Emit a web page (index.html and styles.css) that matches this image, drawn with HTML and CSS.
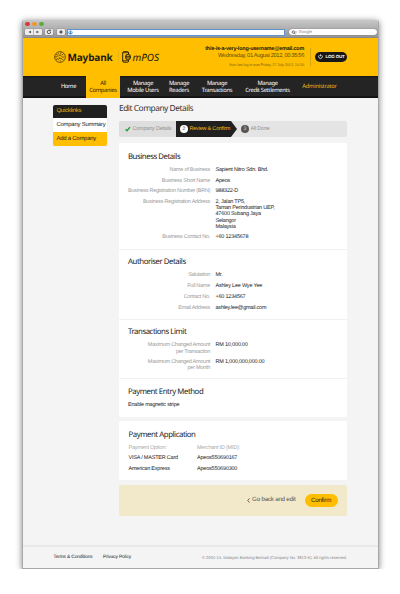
FILE: index.html
```
<!DOCTYPE html>
<html lang="en">
<head>
<meta charset="utf-8">
<title>Edit Company Details</title>
<link rel="stylesheet" href="styles.css">
</head>
<body>
<div class="window">
  <div class="chrome">
    <div class="lights"><i class="red"></i><i class="amber"></i><i class="green"></i></div>
    <div class="toolbar">
      <div class="btn pair"><svg viewBox="0 0 17 6"><path d="M6 1.7v2.6L3.5 3zM11.5 1.7v2.6L14 3z" fill="#444"/><path d="M8.5 0v6" stroke="#999" stroke-width=".6"/></svg></div>
      <div class="btn reload"><svg viewBox="0 0 8 6"><path d="M5.6 2.6A1.7 1.7 0 1 1 4 1.3h1.4M4.7.3l1 1-1 1" fill="none" stroke="#333" stroke-width=".8"/></svg></div>
      <div class="btn add"><svg viewBox="0 0 8 6"><path d="M4 1.3v3.4M2.3 3h3.4" stroke="#333" stroke-width="1.1"/></svg></div>
      <div class="address"><svg viewBox="0 0 6 6"><circle cx="3" cy="3" r="2.5" fill="#3c87d2"/><path d="M1.2 1.5l1.4.4-.3 1.4-1 .2zM3.8 1l1 1.4-.7 1.9-.7-1.1z" fill="#d9efff"/></svg></div>
      <div class="search"><svg viewBox="0 0 7 6"><circle cx="2.7" cy="2.5" r="1.5" fill="none" stroke="#333" stroke-width=".8"/><path d="M3.8 3.6l1.4 1.6M5.2 2.4h1.5" stroke="#333" stroke-width=".8"/></svg><span>Google</span></div>
    </div>
  </div>
  <header class="header">
    <div class="logo">
      <svg class="tiger" viewBox="0 0 12 12"><g fill="none" stroke="#352a12" stroke-width=".7"><circle cx="6" cy="6" r="5.4"/><path d="M2 3.500l2 .7M1 6l2.500-.5M2 8.500l2-1M4 2l1.200 1.600M7 1.200l-.4 2M9.500 3l-1.700 1M4.200 5.200c1.500-1.500 3-.9 3.600.3s1.600.6 2.700.4M4 8.800c1-2 2.700-1.800 4-.8M6 6.300l-.9 1M7 10.600L6 9.200M9.600 8.900l-1.400-.6"/></g></svg>
      <span class="brand">Maybank</span>
      <i class="logo-rule"></i>
      <svg class="phone" viewBox="0 0 10 12"><path d="M6.600 3V1.800Q6.600 .7 5.500 .7H1.800Q.7.7.7 1.800V10Q.7 11.200 1.800 11.200H5.500Q6.600 11.200 6.600 10V8.800" fill="none" stroke="#2b2415" stroke-width="1"/><path d="M1 1.700h5.300M1 9.700h5.300" stroke="#2b2415" stroke-width=".8"/><circle cx="6" cy="5.900" r="2.400" fill="#ffbe00" stroke="#2b2415" stroke-width="1.100"/><path d="M4 5.900h4" stroke="#2b2415" stroke-width="1.200"/></svg>
      <span class="product">mPOS</span>
    </div>
    <div class="account">
      <b class="user">this-is-a-very-long-username@email.com</b>
      <span class="date">Wednesday, 01 August 2012, 00:35:56</span>
      <span class="last">Your last log in was Friday, 27 July 2012, 10:20</span>
    </div>
    <div class="logout"><svg viewBox="0 0 6 6"><path d="M1.700 1.400a2.200 2.200 0 1 0 2.600 0M3 .3v2.500" fill="none" stroke="#fff" stroke-width=".9"/></svg><span>LOG OUT</span></div>
  </header>
  <nav class="nav">
    <a class="n-home">Home</a>
    <a class="n-all">All<br>Companies</a>
    <a class="n-users">Manage<br>Mobile Users</a>
    <a class="n-readers">Manage<br>Readers</a>
    <a class="n-trans">Manage<br>Transactions</a>
    <a class="n-credit">Manage<br>Credit Settlements</a>
    <a class="n-admin">Administrator</a>
  </nav>
  <div class="content">
    <aside class="side">
      <div class="side-title">Quicklinks</div>
      <a class="side-link">Company Summary</a>
      <a class="side-link active">Add a Company</a>
    </aside>
    <main class="main">
      <h1>Edit Company Details</h1>
      <div class="steps">
        <div class="step done"><svg viewBox="0 0 6 6"><path d="M.6 3.200l1.600 1.700L5.400.9" fill="none" stroke="#23a03c" stroke-width="1.500"/></svg><span>Company Details</span></div>
        <div class="step current"><i class="num">2</i><span>Review &amp; Confirm</span></div>
        <div class="step next"><i class="num">3</i><span>All Done</span></div>
      </div>
      <div class="card">
        <section class="business">
          <h2>Business Details</h2>
          <dl>
            <dt>Name of Business</dt><dd>Sapient Nitro Sdn. Bhd.</dd>
            <dt>Business Short Name</dt><dd>Apeos</dd>
            <dt>Business Registration Number (BRN)</dt><dd>988322-D</dd>
            <dt>Business Registration Address</dt><dd>2, Jalan TP5,<br>Taman Perindustrian UEP,<br>47600 Subang Jaya<br>Selangor<br>Malaysia</dd>
            <dt>Business Contact No.</dt><dd>+60 12345678</dd>
          </dl>
        </section>
        <section class="authoriser">
          <h2>Authoriser Details</h2>
          <dl>
            <dt>Salutation</dt><dd>Mr.</dd>
            <dt>Full Name</dt><dd>Ashley Lee Wye Yee</dd>
            <dt>Contact No.</dt><dd>+60 1234567</dd>
            <dt>Email Address</dt><dd>ashley.lee@gmail.com</dd>
          </dl>
        </section>
        <section class="limit">
          <h2>Transactions Limit</h2>
          <dl>
            <dt>Maximum Changed Amount<br>per Transaction</dt><dd>RM 10,000.00</dd>
            <dt>Maximum Changed Amount<br>per Month</dt><dd>RM 1,000,000,000.00</dd>
          </dl>
        </section>
        <section class="entry">
          <h2>Payment Entry Method</h2>
          <p>Enable magnetic stripe</p>
        </section>
      </div>
      <div class="card application">
        <h2>Payment Application</h2>
        <div class="options">
          <span class="muted">Payment Option:</span><span class="muted">Merchant ID (MID):</span>
          <span>VISA / MASTER Card</span><span>Apeos550690167</span>
          <span>American Express</span><span>Apeos550690300</span>
        </div>
      </div>
      <div class="actions">
        <a class="back"><svg viewBox="0 0 3 5"><path d="M2.500 .4L.7 2.500l1.800 2.100" fill="none" stroke="#444" stroke-width=".8"/></svg><span>Go back and edit</span></a>
        <a class="confirm">Confirm</a>
      </div>
    </main>
  </div>
  <footer class="footer">
    <a class="terms">Terms &amp; Conditions</a><a class="privacy">Privacy Policy</a>
    <span class="copy">© 2001-14. Malayan Banking Berhad (Company No. 3813-K). All rights reserved.</span>
  </footer>
</div>
</body>
</html>
```
FILE: styles.css
```
* { box-sizing: border-box; }
body { margin: 0; background: #fff; font: 5.5px/6.3px "Liberation Sans", sans-serif; letter-spacing: -.21px; color: #222; overflow: hidden; white-space: nowrap; text-rendering: geometricPrecision; }
h1, h2, dl, dd, p { margin: 0; }
i { font-style: normal; display: block; }
svg { display: block; flex: none; overflow: visible; }

.window { width: 357px; height: 548.5px; margin: 20px 0 0 22px; display: flex; flex-direction: column; border: 1px solid #a8a8a8; border-top: 0; border-radius: 3px 3px 0 0; overflow: hidden; background: #f4f4f4; box-shadow: 0 1px 6px rgba(0,0,0,.5); }

.chrome { height: 18px; flex: none; background: linear-gradient(#c8c8c8, #969696); border-bottom: 1px solid #888; }
.lights { display: flex; gap: 2.5px; padding: 2px 0 0 2px; height: 8px; }
.lights i { width: 4.5px; height: 4px; border-radius: 50%; }
.red { background: #e0352f; } .amber { background: #f0962b; } .green { background: #5cab36; }
.toolbar { display: flex; align-items: center; height: 8px; padding-left: 2px; }
.btn { height: 6px; background: #ececec; border-radius: 1px; box-shadow: 0 0 1px #444; }
.btn svg { height: 6px; width: 100%; }
.pair { width: 17px; } .reload { width: 8px; margin-left: 3px; } .add { width: 8px; margin-left: 3.5px; }
.address { width: 218px; height: 7px; margin-left: 2.5px; background: #fff; border: 1px solid #5d94cf; }
.address svg { width: 5px; height: 5px; }
.search { width: 88px; height: 6.5px; margin-left: 4px; border-radius: 4px; background: #fff; box-shadow: 0 0 1px #444; display: flex; align-items: center; padding-left: 2px; gap: 1.5px; font-size: 4.2px; letter-spacing: 0; color: #888; }
.search svg { width: 6px; height: 5px; }

.header { height: 37.5px; flex: none; background: #ffbe00; display: flex; }
.logo { display: flex; align-items: center; height: 37px; width: 146px; padding-left: 31px; }
.tiger { width: 12px; height: 12px; }
.brand { font: bold 10px/14px "Noto Sans", sans-serif; color: #201b10; width: 46px; margin-left: 1.5px; letter-spacing: -.15px; }
.logo-rule { width: 1px; height: 11px; margin-left: 4.5px; background: #edb20c; }
.phone { width: 10px; height: 12px; margin-left: 3px; }
.product { font: italic 10px/14px "Noto Sans", sans-serif; color: #1c1810; margin-left: .5px; letter-spacing: -.05px; }
.account { width: 135px; padding-top: 8px; display: flex; flex-direction: column; align-items: flex-end; line-height: 6.5px; color: #5f4b11; }
.user { color: #241d0c; font-size: 5.4px; letter-spacing: -.18px; }
.date { font-size: 5.7px; letter-spacing: -.33px; }
.last { font-size: 3.9px; line-height: 8px; padding-top: 1.5px; letter-spacing: -.12px; color: #8a6911; }
.logout { align-self: flex-start; margin: 14px 0 0 11px; width: 32px; height: 9.5px; border-radius: 5px; background: #171717; color: #fff; display: flex; align-items: center; gap: 2.5px; padding-left: 3px; font-size: 4.5px; font-weight: bold; position: relative; }
.logout::before { content: ""; position: absolute; left: -5px; top: -4px; width: 1px; height: 18px; background: #d8a414; }
.logout svg { width: 5px; height: 5px; }

.nav { height: 22px; flex: none; background: linear-gradient(#151515, #242424 2px, #242424 19.5px, #111 21px); display: flex; font: 5.8px/7px "Noto Sans", sans-serif; letter-spacing: -.33px; color: #fff; text-align: center; }
.nav a { display: flex; align-items: center; justify-content: center; }
.n-home { width: 33px; margin-left: 29px; }
.nav .n-all { width: 34px; margin-left: 1px; background: #ffbe00; color: #302503; }
.n-users { width: 46px; } .n-readers { width: 26px; } .n-trans { width: 50px; } .n-credit { width: 51px; }
.nav .n-admin { width: 53px; color: #eeb213; letter-spacing: -.26px; }

.content { display: flex; height: 447.5px; flex: none; padding: 7.5px 0 0 30px; }
.side { width: 53.5px; height: 40.5px; border-radius: 2px; overflow: hidden; box-shadow: 0 0 1px rgba(0,0,0,.15); }
.side > * { display: flex; align-items: center; padding-left: 3.5px; height: 14px; font-size: 5.9px; }
.side .side-title { height: 13px; background: #202020; color: #efb40d; }
.side-link { background: #fff; }
.side .active { height: 13.5px; background: #ffbe00; }
.main { width: 228px; margin-left: 12.5px; color: #222; }
h1 { font: 8.4px/11px "Noto Sans", sans-serif; letter-spacing: -.48px; color: #333; margin-top: -2.5px; }
h2 { font: 7.8px/10px "Noto Sans", sans-serif; letter-spacing: -.45px; color: #222; }
.steps { display: flex; margin-top: 7.5px; height: 16px; background: #e4e4e4; border-radius: 2px; color: #929292; overflow: hidden; }
.step { display: flex; align-items: center; }
.done { width: 57px; padding-left: 6px; gap: 2px; background: #dedede; }
.done svg { width: 5.5px; height: 6px; }
.current { width: 61px; padding-left: 4px; gap: 1.5px; background: #202020; color: #f3b90e; clip-path: polygon(0 0, 55px 0, 61px 50%, 55px 100%, 0 100%); }
.num { width: 8px; height: 8px; border-radius: 50%; background: #fff; color: #222; text-align: center; font-size: 5px; line-height: 8px; letter-spacing: 0; }
.next { padding-left: 4px; gap: 1.5px; }
.next .num { background: #555; color: #ccc; }

.card { margin-top: 6px; background: #fff; border-radius: 2px; height: 273.5px; }
.card section { padding: 8px 0 0 9px; border-top: 1px solid #f2f2f2; }
.card .business { border-top: 0; padding-top: 8.5px; }
.business { height: 106px; } .authoriser { height: 70px; } .limit { height: 59px; }
dl { display: grid; grid-template-columns: 82px 1fr; column-gap: 5.5px; row-gap: 4.2px; margin-top: 5.8px; }
dt { text-align: right; color: #9b9b9b; letter-spacing: -.26px; }
.authoriser dl { row-gap: 4.7px; margin-top: 5.6px; }
.card .authoriser, .card .limit { padding-top: 6.7px; }
.card .entry { padding-top: 7.5px; }
.entry p { margin-top: 5.8px; }
.limit dl { margin-top: 5.6px; }
.card.application { height: 58.5px; margin-top: 4.5px; padding: 8.5px 0 0 9.5px; }
.options { display: grid; grid-template-columns: 68.5px 1fr; row-gap: 4.1px; margin-top: 5.5px; }
.muted { color: #aaa; }
.actions { margin-top: 5px; height: 31.5px; background: #f2e9ca; border-radius: 2px; display: flex; align-items: center; justify-content: flex-end; padding-right: 9.5px; color: #555; font-size: 6.2px; }
.back { display: flex; align-items: center; gap: 2px; }
.back svg { width: 3px; height: 5px; }
.confirm { margin-left: 9px; width: 33px; height: 13px; border-radius: 7px; background: #ffbe00; color: #2c2205; text-align: center; line-height: 13px; }

.footer { height: 23px; flex: none; border-top: 2px solid #e8e8e8; display: flex; align-items: center; padding: 1px 31px 0 30.5px; font-size: 4.8px; letter-spacing: -.14px; color: #222; }
.privacy { margin-left: 10.5px; }
.copy { margin-left: auto; color: #888; font-size: 4.15px; letter-spacing: -.04px; }
```
